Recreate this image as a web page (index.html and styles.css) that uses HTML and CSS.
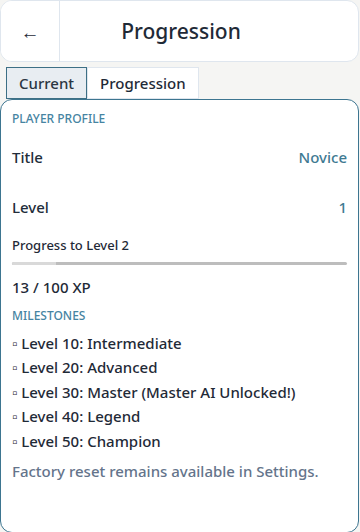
FILE: index.html
```html
<!DOCTYPE html>
<html lang="en">
<head>
    <meta charset="UTF-8">
    <meta name="viewport" content="width=device-width, initial-scale=1.0">
    <title>Progression</title>
    <link rel="stylesheet" href="styles.css">
</head>
<body>

    <header class="topbar">
        <button class="back">&larr;</button>
        <h1>Progression</h1>
        <div class="spacer"></div>
    </header>

    <nav class="tabs">
        <button class="tab active">Current</button>
        <button class="tab">Progression</button>
    </nav>

    <section class="card">
        <h3 class="section-label">Player Profile</h3>

        <div class="row first">
            <span class="row-label">Title</span>
            <span class="row-value">Novice</span>
        </div>
        <div class="row">
            <span class="row-label">Level</span>
            <span class="row-value">1</span>
        </div>

        <p class="progress-label">Progress to Level 2</p>
        <div class="bar"><div class="bar-fill" style="width: 13%"></div></div>
        <p class="xp">13 / 100 XP</p>

        <h3 class="section-label milestones-label">Milestones</h3>
        <ul class="milestones">
            <li>&#9643; Level 10: Intermediate</li>
            <li>&#9643; Level 20: Advanced</li>
            <li>&#9643; Level 30: Master (Master AI Unlocked!)</li>
            <li>&#9643; Level 40: Legend</li>
            <li>&#9643; Level 50: Champion</li>
        </ul>

        <p class="note">Factory reset remains available in Settings.</p>
    </section>

</body>
</html>
```

FILE: styles.css
```css
* {
    box-sizing: border-box;
    margin: 0;
    padding: 0;
}
body {
    font-family: "Noto Sans", "Open Sans", sans-serif;
    background-color: #f5f5f3;
    color: #1f2a37;
    width: 360px;
    height: 532px;
    overflow: hidden;
}
.topbar {
    display: flex;
    align-items: center;
    height: 62px;
    background: white;
    border: 1px solid #dfe6ee;
    border-radius: 12px;
    overflow: hidden;
    width: 359px;
}
.back {
    width: 59px;
    height: 61px;
    border: none;
    border-right: 1px solid #dfe6ee;
    background: white;
    font-size: 19px;
    color: #1f2a37;
    font-family: "Noto Sans", sans-serif;
    padding-top: 1px;
}
.topbar h1 {
    flex: 1;
    text-align: center;
    font-size: 21px;
    font-weight: 500;
    color: #1f2a37;
    margin-left: 3px;
}
.spacer {
    width: 59px;
}
.tabs {
    display: flex;
    margin: 5px 0 0 6px;
}
.tab {
    font-family: inherit;
    font-size: 15px;
    font-weight: 500;
    color: #1f2a37;
    background: white;
    border: 1px solid #dfe6ee;
    height: 32px;
    padding: 0 12px;
}
.tab.active {
    background: #e8edf2;
    border-color: #3d6f85;
    color: #2b3642;
}
.card {
    background: white;
    border: 1.5px solid #3d7590;
    border-radius: 12px;
    width: 359px;
    height: 434px;
    padding: 10px 11px;
}
.section-label {
    font-size: 12px;
    font-weight: 500;
    text-transform: uppercase;
    color: #4684a2;
}
.row {
    display: flex;
    justify-content: space-between;
    align-items: center;
    font-size: 15px;
    font-weight: 500;
    height: 50px;
}
.row.first {
    margin-top: 5px;
}
.row-label {
    color: #222d3a;
}
.row-value {
    color: #3f7a92;
}
.progress-label {
    font-size: 13px;
    font-weight: 500;
    margin-top: 4px;
}
.bar {
    height: 3px;
    background: #bdbdbd;
    border-radius: 2px;
    margin-top: 8px;
    overflow: hidden;
}
.bar-fill {
    height: 100%;
    background: #d9d9d9;
}
.xp {
    font-size: 15px;
    font-weight: 500;
    margin-top: 12px;
}
.milestones-label {
    margin-top: 10px;
}
.milestones {
    list-style: none;
    margin-top: 7px;
}
.milestones li {
    font-size: 15px;
    font-weight: 500;
    line-height: 24.4px;
    color: #1f2a37;
}
.note {
    font-size: 15px;
    font-weight: 500;
    color: #64748b;
    margin-top: 8px;
}
```
